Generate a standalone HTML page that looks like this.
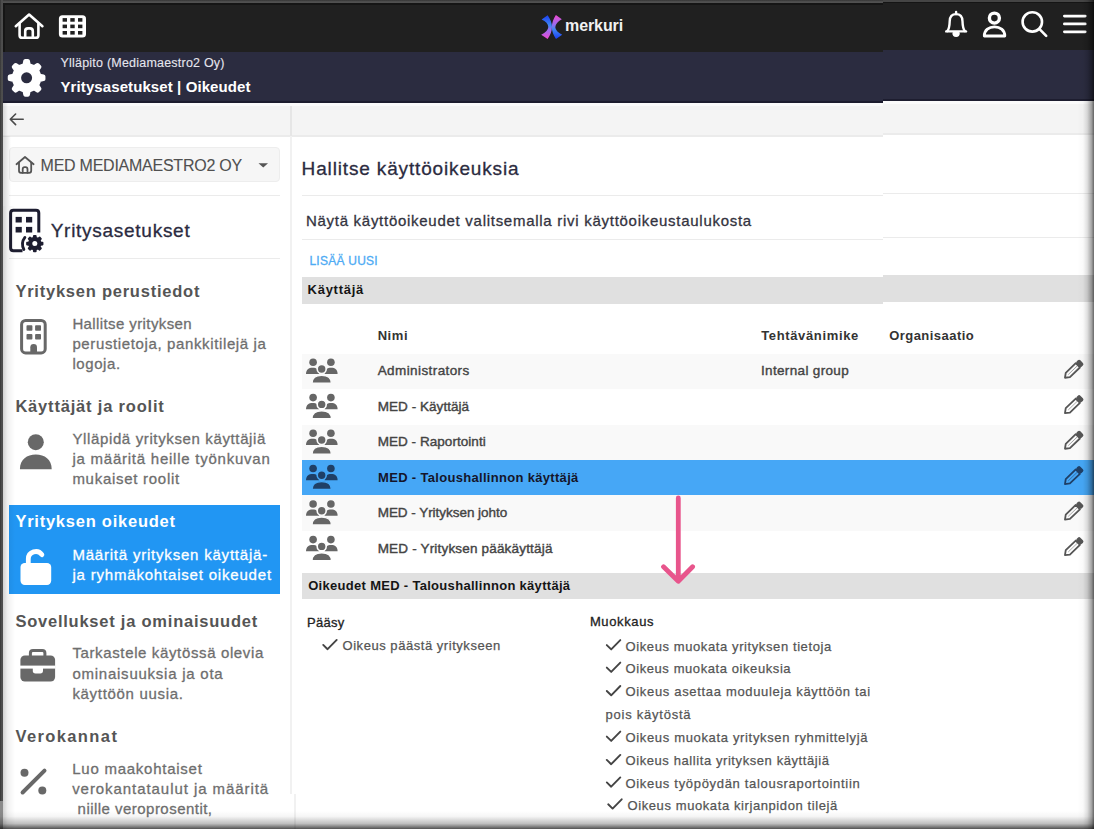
<!DOCTYPE html>
<html><head><meta charset="utf-8">
<style>
html,body{margin:0;padding:0}
body{width:1094px;height:829px;overflow:hidden;position:relative;background:#fff;font-family:"Liberation Sans",sans-serif}
.b{position:absolute}
.t{position:absolute;white-space:nowrap;line-height:0}
svg{position:absolute;overflow:visible}
</style></head><body>
<!-- top bar -->
<div class="b" style="left:0;top:0;width:1094px;height:52px;background:#202020"></div>
<!-- navy -->
<div class="b" style="left:0;top:52px;width:1094px;height:49px;background:#2b2c40"></div>
<div class="b" style="left:0;top:101px;width:1094px;height:2px;background:#1d1d2f"></div>
<!-- gray bar -->
<div class="b" style="left:0;top:103px;width:1094px;height:3px;background:#fbfbfb"></div>
<div class="b" style="left:0;top:106px;width:1094px;height:29px;background:#f4f4f4"></div>
<div class="b" style="left:0;top:135px;width:1094px;height:1.5px;background:#ebebeb"></div>
<!-- sidebar divider -->
<div class="b" style="left:290.2px;top:106px;width:1.5px;height:30px;background:#e6e6e6"></div>
<div class="b" style="left:290.2px;top:136px;width:1.5px;height:658px;background:#f1f1f1"></div>
<div class="b" style="left:294px;top:794px;width:1.5px;height:35px;background:#f1f1f1"></div>
<!-- dropdown -->
<div class="b" style="left:9.3px;top:146.6px;width:269px;height:33.5px;background:#f6f6f6;border:1px solid #ededed;border-radius:4px"></div>
<div class="b" style="left:9px;top:195.2px;width:271px;height:1.2px;background:#ebebeb"></div>
<div class="b" style="left:9px;top:257.6px;width:271px;height:1.2px;background:#ebebeb"></div>
<!-- sidebar selected -->
<div class="b" style="left:9.3px;top:505.1px;width:270.9px;height:88.5px;background:#2196f3"></div>
<!-- main dividers -->
<div class="b" style="left:302px;top:194.8px;width:792px;height:1.2px;background:#ebebeb"></div>
<div class="b" style="left:302px;top:238.8px;width:792px;height:1.2px;background:#ebebeb"></div>
<!-- band 1 -->
<div class="b" style="left:302.4px;top:277px;width:792px;height:26.5px;background:#e0e0e0"></div>
<!-- rows -->
<div class="b" style="left:302.3px;top:353.6px;width:792px;height:35.4px;background:#f9f9f9"></div>
<div class="b" style="left:302.3px;top:424.6px;width:792px;height:35.2px;background:#f9f9f9"></div>
<div class="b" style="left:302.3px;top:459.9px;width:792px;height:35.5px;background:#46a7f6"></div>
<div class="b" style="left:302.3px;top:495.4px;width:792px;height:35.6px;background:#f9f9f9"></div>
<!-- band 2 -->
<div class="b" style="left:302.4px;top:572.5px;width:792px;height:26.5px;background:#e0e0e0"></div>
<svg width="1094" height="829" style="left:0;top:0"><g fill="none" stroke="#ffffff" stroke-width="2.6" stroke-linecap="round" stroke-linejoin="round"><path d="M15.8 26.2 L29.1 14.6 L42.4 26.2"/><path d="M19.6 23.8 V35.2 Q19.6 37.8 22.2 37.8 H35.8 Q38.4 37.8 38.4 35.2 V23.8"/><path d="M25.2 37.8 V31.2 Q25.2 28.4 28 28.4 H30 Q32.8 28.4 32.8 31.2 V37.8"/></g><rect x="58.9" y="15.3" width="27.1" height="22.2" rx="3.5" fill="#fff"/><rect x="62.6" y="18.1" width="4.4" height="3.6" fill="#202020"/><rect x="62.6" y="24.6" width="4.4" height="3.6" fill="#202020"/><rect x="62.6" y="31.0" width="4.4" height="3.6" fill="#202020"/><rect x="70.3" y="18.1" width="4.4" height="3.6" fill="#202020"/><rect x="70.3" y="24.6" width="4.4" height="3.6" fill="#202020"/><rect x="70.3" y="31.0" width="4.4" height="3.6" fill="#202020"/><rect x="78.0" y="18.1" width="4.4" height="3.6" fill="#202020"/><rect x="78.0" y="24.6" width="4.4" height="3.6" fill="#202020"/><rect x="78.0" y="31.0" width="4.4" height="3.6" fill="#202020"/><defs><linearGradient id="gA" x1="0" y1="0" x2="0" y2="1"><stop offset="0" stop-color="#1b3ef2"/><stop offset="0.42" stop-color="#3f86f2"/><stop offset="0.62" stop-color="#9a6cf0"/><stop offset="1" stop-color="#f048d0"/></linearGradient><linearGradient id="gB" x1="0" y1="0" x2="0" y2="1"><stop offset="0" stop-color="#f048d0"/><stop offset="0.4" stop-color="#9a6cf0"/><stop offset="0.6" stop-color="#3f86f2"/><stop offset="1" stop-color="#1b3ef2"/></linearGradient></defs><path d="M541.6 19.6 L547.6 15.2 Q551.9 21 552 27 Q551.9 33 547.6 38.9 L541.2 34.8 Q548 31.5 548.3 27 Q548 22.6 541.6 19.6 Z" fill="url(#gA)"/><path d="M561.8 19.3 L555.9 15 Q551.9 21 551.8 27.3 Q551.9 33.2 556 38.9 L562.2 34.7 Q555.6 31.5 555.3 27.3 Q555.6 22.6 561.8 19.3 Z" fill="url(#gB)"/><g transform="translate(0 1.6)"><g fill="none" stroke="#ffffff" stroke-width="2.4" stroke-linecap="round" stroke-linejoin="round"><path d="M946.2 31.8 H966"/><path d="M947.2 31.6 C949.3 29.2 949.6 26 949.7 21.6 C949.8 16.9 952.5 14.5 956.1 14.5 C959.7 14.5 962.4 16.9 962.5 21.6 C962.6 26 962.9 29.2 965 31.6"/><path d="M956.1 12.3 V14.4"/><path d="M953.6 33.6 A2.5 2.5 0 0 0 958.6 33.6 Z" fill="#fff"/></g><g fill="none" stroke="#ffffff" stroke-width="2.8" stroke-linejoin="round"><circle cx="994.4" cy="18.5" r="5" stroke-width="3.4"/><path d="M984.3 36.4 C984.3 30.5 989 27.2 994.5 27.2 C1000 27.2 1004.8 30.5 1004.8 36.4 Z"/></g><g fill="none" stroke="#ffffff" stroke-width="2.6" stroke-linecap="round"><circle cx="1032.3" cy="22.3" r="9.7"/><path d="M1039.3 29.3 L1046.2 36.2"/></g><g fill="none" stroke="#ffffff" stroke-width="2.8" stroke-linecap="round"><path d="M1064.4 16.5 H1085.2 M1064.4 24.3 H1085.2 M1064.4 32.2 H1085.2"/></g></g></svg>
<svg width="1094" height="829" style="left:0;top:0"><path d="M24.47 64.98 L25.27 60.95 L27.93 60.95 L28.73 64.98 L34.16 67.22 L37.58 64.95 L39.45 66.82 L37.18 70.24 L39.42 75.67 L43.45 76.47 L43.45 79.13 L39.42 79.93 L37.18 85.36 L39.45 88.78 L37.58 90.65 L34.16 88.38 L28.73 90.62 L27.93 94.65 L25.27 94.65 L24.47 90.62 L19.04 88.38 L15.62 90.65 L13.75 88.78 L16.02 85.36 L13.78 79.93 L9.75 79.13 L9.75 76.47 L13.78 75.67 L16.02 70.24 L13.75 66.82 L15.62 64.95 L19.04 67.22 Z" fill="#fff" stroke="#fff" stroke-width="4" stroke-linejoin="round"/><circle cx="26.6" cy="77.8" r="5.5" fill="#2b2c40"/></svg>
<svg width="1094" height="829" style="left:0;top:0"><g fill="none" stroke="#4a4a4a" stroke-width="1.6" stroke-linecap="round" stroke-linejoin="round"><path d="M23.2 119.3 H10.5 M15.6 114 L10.3 119.3 L15.6 124.6"/></g><g fill="none" stroke="#555" stroke-width="1.8" stroke-linecap="round" stroke-linejoin="round"><path d="M16.5 164.2 L25 157 L33.6 164.2"/><path d="M19 162.6 V170.8 Q19 172.8 21 172.8 H29.2 Q31.2 172.8 31.2 170.8 V162.6"/><path d="M22.7 172.8 V169.2 Q22.7 167.2 24.7 167.2 H25.5 Q27.5 167.2 27.5 169.2 V172.8"/></g><path d="M258.5 163.2 H268 L263.25 167.6 Z" fill="#555"/><g fill="none" stroke="#1d1d30" stroke-width="3" stroke-linejoin="round"><path d="M22.5 250.8 H13.5 Q10.6 250.8 10.6 247.8 V213 Q10.6 210.2 13.5 210.2 H36 Q38.8 210.2 38.8 213 V232.5"/><path d="M24.9 237.4 A11.2 11.2 0 0 0 23.9 249.5" stroke-width="2.8" stroke-linecap="round"/></g><rect x="15.6" y="216.9" width="6.2" height="5.6" fill="#1d1d30"/><rect x="26" y="216.9" width="6.2" height="5.6" fill="#1d1d30"/><rect x="15.6" y="226.9" width="6.2" height="5.6" fill="#1d1d30"/><rect x="26" y="226.9" width="6.2" height="5.6" fill="#1d1d30"/><path d="M33.65 237.81 L33.88 235.85 L35.72 235.85 L35.95 237.81 L38.08 238.69 L39.63 237.47 L40.93 238.77 L39.71 240.32 L40.59 242.45 L42.55 242.68 L42.55 244.52 L40.59 244.75 L39.71 246.88 L40.93 248.43 L39.63 249.73 L38.08 248.51 L35.95 249.39 L35.72 251.35 L33.88 251.35 L33.65 249.39 L31.52 248.51 L29.97 249.73 L28.67 248.43 L29.89 246.88 L29.01 244.75 L27.05 244.52 L27.05 242.68 L29.01 242.45 L29.89 240.32 L28.67 238.77 L29.97 237.47 L31.52 238.69 Z" fill="#1d1d30" stroke="#1d1d30" stroke-width="1.8" stroke-linejoin="round"/><circle cx="34.8" cy="243.6" r="2.5" fill="#fff"/><rect x="21.6" y="320.4" width="23.6" height="32.5" rx="4" fill="none" stroke="#686868" stroke-width="3"/><rect x="26.5" y="325.3" width="5.9" height="5.5" rx="0.8" fill="#686868"/><rect x="35.1" y="325.3" width="5.9" height="5.5" rx="0.8" fill="#686868"/><rect x="26.5" y="334.1" width="5.9" height="5.5" rx="0.8" fill="#686868"/><rect x="35.1" y="334.1" width="5.9" height="5.5" rx="0.8" fill="#686868"/><path d="M30.3 353 V347.3 A3.35 3.35 0 0 1 37 347.3 V353 Z" fill="#686868"/><circle cx="35.8" cy="442.2" r="8" fill="#686868"/><path d="M19.9 469.3 C19.9 459.5 27 454.5 35.8 454.5 C44.6 454.5 51.7 459.5 51.7 469.3 Z" fill="#686868"/><rect x="20.5" y="562.9" width="30.7" height="22" rx="4.2" fill="#fff"/><path d="M28.3 564 V559 A7.5 7.5 0 0 1 41.9 554.7" fill="none" stroke="#fff" stroke-width="4.8" stroke-linecap="round"/><rect x="30.4" y="650.5" width="14.5" height="8" rx="2.6" fill="none" stroke="#686868" stroke-width="3"/><rect x="20.4" y="655.4" width="34.7" height="26.2" rx="4.5" fill="#686868"/><rect x="20" y="665.6" width="35.5" height="3" fill="#fff"/><path d="M32.8 668 V670.8 Q32.8 673.5 35.5 673.5 H40.3 Q43 673.5 43 670.8 V668 Z" fill="#fff"/><circle cx="24.5" cy="772.8" r="4" fill="#686868"/><circle cx="42.3" cy="790.6" r="4" fill="#686868"/><path d="M22.6 792.5 L44.5 770.6" stroke="#686868" stroke-width="4" stroke-linecap="round"/></svg>
<svg width="1094" height="829" style="left:0;top:0"><circle cx="313.1" cy="362.2" r="3.8" fill="#666666"/><circle cx="330.9" cy="362.2" r="3.8" fill="#666666"/><path d="M306 373.9 C306 369.6 308.8 367.7 312.6 367.7 C316.4 367.7 319.2 369.6 319.2 373.9 Z" fill="#666666"/><path d="M324.6 373.9 C324.6 369.6 327.4 367.7 331.2 367.7 C335 367.7 337.6 369.6 337.6 373.9 Z" fill="#666666"/><circle cx="321.7" cy="369.0" r="4.5" fill="#666666" stroke="#f9f9f9" stroke-width="1.6"/><path d="M312 383.2 C312 377.8 316.3 375.3 321.7 375.3 C327.1 375.3 331.4 377.8 331.4 383.2 Z" fill="#666666" stroke="#f9f9f9" stroke-width="1.4"/><g transform="translate(1073.3 369.7) rotate(-44)"><path d="M-11.6 0 L-7.6 -3 H6.3 V3 H-7.6 Z" fill="none" stroke="#555555" stroke-width="1.8" stroke-linejoin="round"/><rect x="6.6" y="-3.6" width="5" height="7.2" rx="1.8" fill="#555555"/><path d="M-7 0 H5.5" stroke="#555555" stroke-width="0.8" stroke-opacity="0.6"/></g><circle cx="313.1" cy="397.6" r="3.8" fill="#666666"/><circle cx="330.9" cy="397.6" r="3.8" fill="#666666"/><path d="M306 409.3 C306 405.0 308.8 403.1 312.6 403.1 C316.4 403.1 319.2 405.0 319.2 409.3 Z" fill="#666666"/><path d="M324.6 409.3 C324.6 405.0 327.4 403.1 331.2 403.1 C335 403.1 337.6 405.0 337.6 409.3 Z" fill="#666666"/><circle cx="321.7" cy="404.4" r="4.5" fill="#666666" stroke="#ffffff" stroke-width="1.6"/><path d="M312 418.6 C312 413.2 316.3 410.7 321.7 410.7 C327.1 410.7 331.4 413.2 331.4 418.6 Z" fill="#666666" stroke="#ffffff" stroke-width="1.4"/><g transform="translate(1073.3 405.1) rotate(-44)"><path d="M-11.6 0 L-7.6 -3 H6.3 V3 H-7.6 Z" fill="none" stroke="#555555" stroke-width="1.8" stroke-linejoin="round"/><rect x="6.6" y="-3.6" width="5" height="7.2" rx="1.8" fill="#555555"/><path d="M-7 0 H5.5" stroke="#555555" stroke-width="0.8" stroke-opacity="0.6"/></g><circle cx="313.1" cy="433.2" r="3.8" fill="#666666"/><circle cx="330.9" cy="433.2" r="3.8" fill="#666666"/><path d="M306 444.9 C306 440.6 308.8 438.7 312.6 438.7 C316.4 438.7 319.2 440.6 319.2 444.9 Z" fill="#666666"/><path d="M324.6 444.9 C324.6 440.6 327.4 438.7 331.2 438.7 C335 438.7 337.6 440.6 337.6 444.9 Z" fill="#666666"/><circle cx="321.7" cy="440.0" r="4.5" fill="#666666" stroke="#f9f9f9" stroke-width="1.6"/><path d="M312 454.2 C312 448.8 316.3 446.3 321.7 446.3 C327.1 446.3 331.4 448.8 331.4 454.2 Z" fill="#666666" stroke="#f9f9f9" stroke-width="1.4"/><g transform="translate(1073.3 440.7) rotate(-44)"><path d="M-11.6 0 L-7.6 -3 H6.3 V3 H-7.6 Z" fill="none" stroke="#555555" stroke-width="1.8" stroke-linejoin="round"/><rect x="6.6" y="-3.6" width="5" height="7.2" rx="1.8" fill="#555555"/><path d="M-7 0 H5.5" stroke="#555555" stroke-width="0.8" stroke-opacity="0.6"/></g><circle cx="313.1" cy="468.5" r="3.8" fill="#1f3f66"/><circle cx="330.9" cy="468.5" r="3.8" fill="#1f3f66"/><path d="M306 480.2 C306 475.9 308.8 474.0 312.6 474.0 C316.4 474.0 319.2 475.9 319.2 480.2 Z" fill="#1f3f66"/><path d="M324.6 480.2 C324.6 475.9 327.4 474.0 331.2 474.0 C335 474.0 337.6 475.9 337.6 480.2 Z" fill="#1f3f66"/><circle cx="321.7" cy="475.3" r="4.5" fill="#1f3f66" stroke="#46a7f6" stroke-width="1.6"/><path d="M312 489.5 C312 484.1 316.3 481.6 321.7 481.6 C327.1 481.6 331.4 484.1 331.4 489.5 Z" fill="#1f3f66" stroke="#46a7f6" stroke-width="1.4"/><g transform="translate(1073.3 476.0) rotate(-44)"><path d="M-11.6 0 L-7.6 -3 H6.3 V3 H-7.6 Z" fill="none" stroke="#1f3f66" stroke-width="1.8" stroke-linejoin="round"/><rect x="6.6" y="-3.6" width="5" height="7.2" rx="1.8" fill="#1f3f66"/><path d="M-7 0 H5.5" stroke="#1f3f66" stroke-width="0.8" stroke-opacity="0.6"/></g><circle cx="313.1" cy="504.0" r="3.8" fill="#666666"/><circle cx="330.9" cy="504.0" r="3.8" fill="#666666"/><path d="M306 515.7 C306 511.4 308.8 509.5 312.6 509.5 C316.4 509.5 319.2 511.4 319.2 515.7 Z" fill="#666666"/><path d="M324.6 515.7 C324.6 511.4 327.4 509.5 331.2 509.5 C335 509.5 337.6 511.4 337.6 515.7 Z" fill="#666666"/><circle cx="321.7" cy="510.8" r="4.5" fill="#666666" stroke="#f9f9f9" stroke-width="1.6"/><path d="M312 525.0 C312 519.6 316.3 517.1 321.7 517.1 C327.1 517.1 331.4 519.6 331.4 525.0 Z" fill="#666666" stroke="#f9f9f9" stroke-width="1.4"/><g transform="translate(1073.3 511.5) rotate(-44)"><path d="M-11.6 0 L-7.6 -3 H6.3 V3 H-7.6 Z" fill="none" stroke="#555555" stroke-width="1.8" stroke-linejoin="round"/><rect x="6.6" y="-3.6" width="5" height="7.2" rx="1.8" fill="#555555"/><path d="M-7 0 H5.5" stroke="#555555" stroke-width="0.8" stroke-opacity="0.6"/></g><circle cx="313.1" cy="539.6" r="3.8" fill="#666666"/><circle cx="330.9" cy="539.6" r="3.8" fill="#666666"/><path d="M306 551.3 C306 547.0 308.8 545.1 312.6 545.1 C316.4 545.1 319.2 547.0 319.2 551.3 Z" fill="#666666"/><path d="M324.6 551.3 C324.6 547.0 327.4 545.1 331.2 545.1 C335 545.1 337.6 547.0 337.6 551.3 Z" fill="#666666"/><circle cx="321.7" cy="546.4" r="4.5" fill="#666666" stroke="#ffffff" stroke-width="1.6"/><path d="M312 560.6 C312 555.2 316.3 552.7 321.7 552.7 C327.1 552.7 331.4 555.2 331.4 560.6 Z" fill="#666666" stroke="#ffffff" stroke-width="1.4"/><g transform="translate(1073.3 547.1) rotate(-44)"><path d="M-11.6 0 L-7.6 -3 H6.3 V3 H-7.6 Z" fill="none" stroke="#555555" stroke-width="1.8" stroke-linejoin="round"/><rect x="6.6" y="-3.6" width="5" height="7.2" rx="1.8" fill="#555555"/><path d="M-7 0 H5.5" stroke="#555555" stroke-width="0.8" stroke-opacity="0.6"/></g></svg>
<svg width="1094" height="829" style="left:0;top:0"><g fill="none" stroke="#e8558c" stroke-width="4.8" stroke-linecap="round" stroke-linejoin="round"><path d="M678.3 498 V580.5 M663.5 566.8 L678.3 581.2 L692.6 566.8"/></g><path d="M323.2 644.9 L327.6 649.2 L336.7 639.9" fill="none" stroke="#444" stroke-width="1.9" stroke-linecap="round" stroke-linejoin="round"/><path d="M606.8 645.1 L611.2 649.4 L620.3 640.1" fill="none" stroke="#444" stroke-width="1.9" stroke-linecap="round" stroke-linejoin="round"/><path d="M606.8 667.6 L611.2 671.9 L620.3 662.6" fill="none" stroke="#444" stroke-width="1.9" stroke-linecap="round" stroke-linejoin="round"/><path d="M606.8 691.0 L611.2 695.3 L620.3 686.0" fill="none" stroke="#444" stroke-width="1.9" stroke-linecap="round" stroke-linejoin="round"/><path d="M606.8 736.6 L611.2 740.9 L620.3 731.6" fill="none" stroke="#444" stroke-width="1.9" stroke-linecap="round" stroke-linejoin="round"/><path d="M606.8 759.9 L611.2 764.2 L620.3 754.9" fill="none" stroke="#444" stroke-width="1.9" stroke-linecap="round" stroke-linejoin="round"/><path d="M606.8 782.4 L611.2 786.7 L620.3 777.4" fill="none" stroke="#444" stroke-width="1.9" stroke-linecap="round" stroke-linejoin="round"/><path d="M608.2 804.3 L612.6 808.6 L621.7 799.3" fill="none" stroke="#444" stroke-width="1.9" stroke-linecap="round" stroke-linejoin="round"/></svg>
<div class="t" style="left:60.5px;top:62.6px;font-size:12.5px;font-weight:400;color:#e6e6ee;letter-spacing:0.215px;-webkit-text-stroke:0.1px #e6e6ee">Ylläpito (Mediamaestro2 Oy)</div>
<div class="t" style="left:60.5px;top:87.0px;font-size:15px;font-weight:700;color:#ffffff;letter-spacing:0.095px;">Yritysasetukset | Oikeudet</div>
<div class="t" style="left:565.1px;top:25.9px;font-size:16px;font-weight:700;color:#f2f2f2;letter-spacing:-0.117px;">merkuri</div>
<div class="t" style="left:40.6px;top:165.7px;font-size:16px;font-weight:400;color:#505050;letter-spacing:-0.250px;-webkit-text-stroke:0.1px #505050">MED MEDIAMAESTRO2 OY</div>
<div class="t" style="left:50.7px;top:230.9px;font-size:19px;font-weight:400;color:#2b2b40;letter-spacing:0.727px;-webkit-text-stroke:0.3px #2b2b40">Yritysasetukset</div>
<div class="t" style="left:15.4px;top:290.7px;font-size:16.5px;font-weight:700;color:#555555;letter-spacing:0.764px;">Yrityksen perustiedot</div>
<div class="t" style="left:72.4px;top:323.6px;font-size:15px;font-weight:400;color:#6e6e6e;letter-spacing:0.398px;-webkit-text-stroke:0.3px #6e6e6e">Hallitse yrityksen</div>
<div class="t" style="left:72.4px;top:344.2px;font-size:15px;font-weight:400;color:#6e6e6e;letter-spacing:0.627px;-webkit-text-stroke:0.3px #6e6e6e">perustietoja, pankkitilejä ja</div>
<div class="t" style="left:72.4px;top:364.1px;font-size:15px;font-weight:400;color:#6e6e6e;letter-spacing:0.583px;-webkit-text-stroke:0.3px #6e6e6e">logoja.</div>
<div class="t" style="left:15.4px;top:405.7px;font-size:16.5px;font-weight:700;color:#555555;letter-spacing:0.812px;">Käyttäjät ja roolit</div>
<div class="t" style="left:72.4px;top:438.6px;font-size:15px;font-weight:400;color:#6e6e6e;letter-spacing:0.633px;-webkit-text-stroke:0.3px #6e6e6e">Ylläpidä yrityksen käyttäjiä</div>
<div class="t" style="left:72.4px;top:458.8px;font-size:15px;font-weight:400;color:#6e6e6e;letter-spacing:0.761px;-webkit-text-stroke:0.3px #6e6e6e">ja määritä heille työnkuvan</div>
<div class="t" style="left:72.4px;top:479.1px;font-size:15px;font-weight:400;color:#6e6e6e;letter-spacing:0.721px;-webkit-text-stroke:0.3px #6e6e6e">mukaiset roolit</div>
<div class="t" style="left:15.4px;top:521.0px;font-size:16.5px;font-weight:700;color:#ffffff;letter-spacing:0.757px;">Yrityksen oikeudet</div>
<div class="t" style="left:72.4px;top:554.8px;font-size:15px;font-weight:400;color:#ffffff;letter-spacing:0.791px;-webkit-text-stroke:0.3px #ffffff">Määritä yrityksen käyttäjä-</div>
<div class="t" style="left:72.4px;top:574.5px;font-size:15px;font-weight:400;color:#ffffff;letter-spacing:0.810px;-webkit-text-stroke:0.3px #ffffff">ja ryhmäkohtaiset oikeudet</div>
<div class="t" style="left:15.4px;top:620.7px;font-size:16.5px;font-weight:700;color:#555555;letter-spacing:0.765px;">Sovellukset ja ominaisuudet</div>
<div class="t" style="left:72.4px;top:653.0px;font-size:15px;font-weight:400;color:#6e6e6e;letter-spacing:0.632px;-webkit-text-stroke:0.3px #6e6e6e">Tarkastele käytössä olevia</div>
<div class="t" style="left:72.4px;top:674.2px;font-size:15px;font-weight:400;color:#6e6e6e;letter-spacing:0.757px;-webkit-text-stroke:0.3px #6e6e6e">ominaisuuksia ja ota</div>
<div class="t" style="left:72.4px;top:694.1px;font-size:15px;font-weight:400;color:#6e6e6e;letter-spacing:0.692px;-webkit-text-stroke:0.3px #6e6e6e">käyttöön uusia.</div>
<div class="t" style="left:15.4px;top:735.8px;font-size:16.5px;font-weight:700;color:#555555;letter-spacing:1.392px;">Verokannat</div>
<div class="t" style="left:72.2px;top:768.8px;font-size:15px;font-weight:400;color:#6e6e6e;letter-spacing:0.752px;-webkit-text-stroke:0.3px #6e6e6e">Luo maakohtaiset</div>
<div class="t" style="left:72.2px;top:789.2px;font-size:15px;font-weight:400;color:#6e6e6e;letter-spacing:0.936px;-webkit-text-stroke:0.3px #6e6e6e">verokantataulut ja määritä</div>
<div class="t" style="left:77.6px;top:808.5px;font-size:15px;font-weight:400;color:#6e6e6e;letter-spacing:0.467px;-webkit-text-stroke:0.3px #6e6e6e">niille veroprosentit,</div>
<div class="t" style="left:301.6px;top:168.5px;font-size:19px;font-weight:400;color:#2b2b40;letter-spacing:0.849px;-webkit-text-stroke:0.3px #2b2b40">Hallitse käyttöoikeuksia</div>
<div class="t" style="left:305.9px;top:220.9px;font-size:15px;font-weight:400;color:#333340;letter-spacing:0.724px;-webkit-text-stroke:0.3px #333340">Näytä käyttöoikeudet valitsemalla rivi käyttöoikeustaulukosta</div>
<div class="t" style="left:309.4px;top:261.3px;font-size:12px;font-weight:400;color:#4eabf4;letter-spacing:0.252px;-webkit-text-stroke:0.3px #4eabf4">LISÄÄ UUSI</div>
<div class="t" style="left:307.6px;top:290.1px;font-size:13px;font-weight:700;color:#151515;letter-spacing:0.717px;">Käyttäjä</div>
<div class="t" style="left:377.7px;top:336.4px;font-size:13px;font-weight:700;color:#333333;letter-spacing:0.543px;">Nimi</div>
<div class="t" style="left:761.2px;top:336.4px;font-size:13px;font-weight:700;color:#333333;letter-spacing:0.645px;">Tehtävänimike</div>
<div class="t" style="left:889.2px;top:336.4px;font-size:13px;font-weight:700;color:#333333;letter-spacing:0.457px;">Organisaatio</div>
<div class="t" style="left:377.7px;top:371.1px;font-size:13.5px;font-weight:400;color:#444444;letter-spacing:0.409px;-webkit-text-stroke:0.4px #444444">Administrators</div>
<div class="t" style="left:761.0px;top:371.3px;font-size:13.5px;font-weight:400;color:#444444;letter-spacing:0.338px;-webkit-text-stroke:0.4px #444444">Internal group</div>
<div class="t" style="left:377.7px;top:406.7px;font-size:13.5px;font-weight:400;color:#444444;letter-spacing:0.048px;-webkit-text-stroke:0.4px #444444">MED - Käyttäjä</div>
<div class="t" style="left:377.7px;top:441.8px;font-size:13.5px;font-weight:400;color:#444444;letter-spacing:0.044px;-webkit-text-stroke:0.4px #444444">MED - Raportointi</div>
<div class="t" style="left:378.1px;top:477.8px;font-size:13px;font-weight:700;color:#15152a;letter-spacing:0.311px;">MED - Taloushallinnon käyttäjä</div>
<div class="t" style="left:377.7px;top:513.3px;font-size:13.5px;font-weight:400;color:#444444;letter-spacing:-0.040px;-webkit-text-stroke:0.4px #444444">MED - Yrityksen johto</div>
<div class="t" style="left:377.7px;top:548.5px;font-size:13.5px;font-weight:400;color:#444444;letter-spacing:0.178px;-webkit-text-stroke:0.4px #444444">MED - Yrityksen pääkäyttäjä</div>
<div class="t" style="left:308.2px;top:586.2px;font-size:13px;font-weight:700;color:#151515;letter-spacing:0.302px;">Oikeudet MED - Taloushallinnon käyttäjä</div>
<div class="t" style="left:307.1px;top:622.5px;font-size:13px;font-weight:400;color:#222222;letter-spacing:0.265px;-webkit-text-stroke:0.3px #222">Pääsy</div>
<div class="t" style="left:342.5px;top:646.2px;font-size:13px;font-weight:400;color:#555555;letter-spacing:0.542px;-webkit-text-stroke:0.25px #555">Oikeus päästä yritykseen</div>
<div class="t" style="left:589.9px;top:622.4px;font-size:13px;font-weight:400;color:#222222;letter-spacing:0.621px;-webkit-text-stroke:0.3px #222">Muokkaus</div>
<div class="t" style="left:625.5px;top:646.5px;font-size:13px;font-weight:400;color:#555555;letter-spacing:0.599px;-webkit-text-stroke:0.25px #555">Oikeus muokata yrityksen tietoja</div>
<div class="t" style="left:625.5px;top:669.0px;font-size:13px;font-weight:400;color:#555555;letter-spacing:0.580px;-webkit-text-stroke:0.25px #555">Oikeus muokata oikeuksia</div>
<div class="t" style="left:625.5px;top:692.4px;font-size:13px;font-weight:400;color:#555555;letter-spacing:0.672px;-webkit-text-stroke:0.25px #555">Oikeus asettaa moduuleja käyttöön tai</div>
<div class="t" style="left:605.5px;top:714.7px;font-size:13px;font-weight:400;color:#555555;letter-spacing:0.760px;-webkit-text-stroke:0.25px #555">pois käytöstä</div>
<div class="t" style="left:625.5px;top:738.0px;font-size:13px;font-weight:400;color:#555555;letter-spacing:0.659px;-webkit-text-stroke:0.25px #555">Oikeus muokata yrityksen ryhmittelyjä</div>
<div class="t" style="left:625.5px;top:761.2px;font-size:13px;font-weight:400;color:#555555;letter-spacing:0.583px;-webkit-text-stroke:0.25px #555">Oikeus hallita yrityksen käyttäjiä</div>
<div class="t" style="left:625.5px;top:783.8px;font-size:13px;font-weight:400;color:#555555;letter-spacing:0.683px;-webkit-text-stroke:0.25px #555">Oikeus työpöydän talousraportointiin</div>
<div class="t" style="left:627.5px;top:805.7px;font-size:13px;font-weight:400;color:#555555;letter-spacing:0.591px;-webkit-text-stroke:0.25px #555">Oikeus muokata kirjanpidon tilejä</div>
<div class="b" style="left:883px;top:0;width:211px;height:320px;overflow:hidden"><div class="b" style="left:-883px;top:-1.6px;width:1094px;height:829px;background:#fff">
<!-- top bar -->
<div class="b" style="left:0;top:0;width:1094px;height:52px;background:#202020"></div>
<!-- navy -->
<div class="b" style="left:0;top:52px;width:1094px;height:49px;background:#2b2c40"></div>
<div class="b" style="left:0;top:101px;width:1094px;height:2px;background:#1d1d2f"></div>
<!-- gray bar -->
<div class="b" style="left:0;top:103px;width:1094px;height:3px;background:#fbfbfb"></div>
<div class="b" style="left:0;top:106px;width:1094px;height:29px;background:#f4f4f4"></div>
<div class="b" style="left:0;top:135px;width:1094px;height:1.5px;background:#ebebeb"></div>
<!-- sidebar divider -->
<div class="b" style="left:290.2px;top:106px;width:1.5px;height:30px;background:#e6e6e6"></div>
<div class="b" style="left:290.2px;top:136px;width:1.5px;height:658px;background:#f1f1f1"></div>
<div class="b" style="left:294px;top:794px;width:1.5px;height:35px;background:#f1f1f1"></div>
<!-- dropdown -->
<div class="b" style="left:9.3px;top:146.6px;width:269px;height:33.5px;background:#f6f6f6;border:1px solid #ededed;border-radius:4px"></div>
<div class="b" style="left:9px;top:195.2px;width:271px;height:1.2px;background:#ebebeb"></div>
<div class="b" style="left:9px;top:257.6px;width:271px;height:1.2px;background:#ebebeb"></div>
<!-- sidebar selected -->
<div class="b" style="left:9.3px;top:505.1px;width:270.9px;height:88.5px;background:#2196f3"></div>
<!-- main dividers -->
<div class="b" style="left:302px;top:194.8px;width:792px;height:1.2px;background:#ebebeb"></div>
<div class="b" style="left:302px;top:238.8px;width:792px;height:1.2px;background:#ebebeb"></div>
<!-- band 1 -->
<div class="b" style="left:302.4px;top:277px;width:792px;height:26.5px;background:#e0e0e0"></div>
<!-- rows -->
<div class="b" style="left:302.3px;top:353.6px;width:792px;height:35.4px;background:#f9f9f9"></div>
<div class="b" style="left:302.3px;top:424.6px;width:792px;height:35.2px;background:#f9f9f9"></div>
<div class="b" style="left:302.3px;top:459.9px;width:792px;height:35.5px;background:#46a7f6"></div>
<div class="b" style="left:302.3px;top:495.4px;width:792px;height:35.6px;background:#f9f9f9"></div>
<!-- band 2 -->
<div class="b" style="left:302.4px;top:572.5px;width:792px;height:26.5px;background:#e0e0e0"></div>
<svg width="1094" height="829" style="left:0;top:0"><g fill="none" stroke="#ffffff" stroke-width="2.6" stroke-linecap="round" stroke-linejoin="round"><path d="M15.8 26.2 L29.1 14.6 L42.4 26.2"/><path d="M19.6 23.8 V35.2 Q19.6 37.8 22.2 37.8 H35.8 Q38.4 37.8 38.4 35.2 V23.8"/><path d="M25.2 37.8 V31.2 Q25.2 28.4 28 28.4 H30 Q32.8 28.4 32.8 31.2 V37.8"/></g><rect x="58.9" y="15.3" width="27.1" height="22.2" rx="3.5" fill="#fff"/><rect x="62.6" y="18.1" width="4.4" height="3.6" fill="#202020"/><rect x="62.6" y="24.6" width="4.4" height="3.6" fill="#202020"/><rect x="62.6" y="31.0" width="4.4" height="3.6" fill="#202020"/><rect x="70.3" y="18.1" width="4.4" height="3.6" fill="#202020"/><rect x="70.3" y="24.6" width="4.4" height="3.6" fill="#202020"/><rect x="70.3" y="31.0" width="4.4" height="3.6" fill="#202020"/><rect x="78.0" y="18.1" width="4.4" height="3.6" fill="#202020"/><rect x="78.0" y="24.6" width="4.4" height="3.6" fill="#202020"/><rect x="78.0" y="31.0" width="4.4" height="3.6" fill="#202020"/><defs><linearGradient id="gA2" x1="0" y1="0" x2="0" y2="1"><stop offset="0" stop-color="#1b3ef2"/><stop offset="0.42" stop-color="#3f86f2"/><stop offset="0.62" stop-color="#9a6cf0"/><stop offset="1" stop-color="#f048d0"/></linearGradient><linearGradient id="gB2" x1="0" y1="0" x2="0" y2="1"><stop offset="0" stop-color="#f048d0"/><stop offset="0.4" stop-color="#9a6cf0"/><stop offset="0.6" stop-color="#3f86f2"/><stop offset="1" stop-color="#1b3ef2"/></linearGradient></defs><path d="M541.6 19.6 L547.6 15.2 Q551.9 21 552 27 Q551.9 33 547.6 38.9 L541.2 34.8 Q548 31.5 548.3 27 Q548 22.6 541.6 19.6 Z" fill="url(#gA2)"/><path d="M561.8 19.3 L555.9 15 Q551.9 21 551.8 27.3 Q551.9 33.2 556 38.9 L562.2 34.7 Q555.6 31.5 555.3 27.3 Q555.6 22.6 561.8 19.3 Z" fill="url(#gB2)"/><g transform="translate(0 1.6)"><g fill="none" stroke="#ffffff" stroke-width="2.4" stroke-linecap="round" stroke-linejoin="round"><path d="M946.2 31.8 H966"/><path d="M947.2 31.6 C949.3 29.2 949.6 26 949.7 21.6 C949.8 16.9 952.5 14.5 956.1 14.5 C959.7 14.5 962.4 16.9 962.5 21.6 C962.6 26 962.9 29.2 965 31.6"/><path d="M956.1 12.3 V14.4"/><path d="M953.6 33.6 A2.5 2.5 0 0 0 958.6 33.6 Z" fill="#fff"/></g><g fill="none" stroke="#ffffff" stroke-width="2.8" stroke-linejoin="round"><circle cx="994.4" cy="18.5" r="5" stroke-width="3.4"/><path d="M984.3 36.4 C984.3 30.5 989 27.2 994.5 27.2 C1000 27.2 1004.8 30.5 1004.8 36.4 Z"/></g><g fill="none" stroke="#ffffff" stroke-width="2.6" stroke-linecap="round"><circle cx="1032.3" cy="22.3" r="9.7"/><path d="M1039.3 29.3 L1046.2 36.2"/></g><g fill="none" stroke="#ffffff" stroke-width="2.8" stroke-linecap="round"><path d="M1064.4 16.5 H1085.2 M1064.4 24.3 H1085.2 M1064.4 32.2 H1085.2"/></g></g></svg>
<svg width="1094" height="829" style="left:0;top:0"><path d="M24.47 64.98 L25.27 60.95 L27.93 60.95 L28.73 64.98 L34.16 67.22 L37.58 64.95 L39.45 66.82 L37.18 70.24 L39.42 75.67 L43.45 76.47 L43.45 79.13 L39.42 79.93 L37.18 85.36 L39.45 88.78 L37.58 90.65 L34.16 88.38 L28.73 90.62 L27.93 94.65 L25.27 94.65 L24.47 90.62 L19.04 88.38 L15.62 90.65 L13.75 88.78 L16.02 85.36 L13.78 79.93 L9.75 79.13 L9.75 76.47 L13.78 75.67 L16.02 70.24 L13.75 66.82 L15.62 64.95 L19.04 67.22 Z" fill="#fff" stroke="#fff" stroke-width="4" stroke-linejoin="round"/><circle cx="26.6" cy="77.8" r="5.5" fill="#2b2c40"/></svg>
<svg width="1094" height="829" style="left:0;top:0"><g fill="none" stroke="#4a4a4a" stroke-width="1.6" stroke-linecap="round" stroke-linejoin="round"><path d="M23.2 119.3 H10.5 M15.6 114 L10.3 119.3 L15.6 124.6"/></g><g fill="none" stroke="#555" stroke-width="1.8" stroke-linecap="round" stroke-linejoin="round"><path d="M16.5 164.2 L25 157 L33.6 164.2"/><path d="M19 162.6 V170.8 Q19 172.8 21 172.8 H29.2 Q31.2 172.8 31.2 170.8 V162.6"/><path d="M22.7 172.8 V169.2 Q22.7 167.2 24.7 167.2 H25.5 Q27.5 167.2 27.5 169.2 V172.8"/></g><path d="M258.5 163.2 H268 L263.25 167.6 Z" fill="#555"/><g fill="none" stroke="#1d1d30" stroke-width="3" stroke-linejoin="round"><path d="M22.5 250.8 H13.5 Q10.6 250.8 10.6 247.8 V213 Q10.6 210.2 13.5 210.2 H36 Q38.8 210.2 38.8 213 V232.5"/><path d="M24.9 237.4 A11.2 11.2 0 0 0 23.9 249.5" stroke-width="2.8" stroke-linecap="round"/></g><rect x="15.6" y="216.9" width="6.2" height="5.6" fill="#1d1d30"/><rect x="26" y="216.9" width="6.2" height="5.6" fill="#1d1d30"/><rect x="15.6" y="226.9" width="6.2" height="5.6" fill="#1d1d30"/><rect x="26" y="226.9" width="6.2" height="5.6" fill="#1d1d30"/><path d="M33.65 237.81 L33.88 235.85 L35.72 235.85 L35.95 237.81 L38.08 238.69 L39.63 237.47 L40.93 238.77 L39.71 240.32 L40.59 242.45 L42.55 242.68 L42.55 244.52 L40.59 244.75 L39.71 246.88 L40.93 248.43 L39.63 249.73 L38.08 248.51 L35.95 249.39 L35.72 251.35 L33.88 251.35 L33.65 249.39 L31.52 248.51 L29.97 249.73 L28.67 248.43 L29.89 246.88 L29.01 244.75 L27.05 244.52 L27.05 242.68 L29.01 242.45 L29.89 240.32 L28.67 238.77 L29.97 237.47 L31.52 238.69 Z" fill="#1d1d30" stroke="#1d1d30" stroke-width="1.8" stroke-linejoin="round"/><circle cx="34.8" cy="243.6" r="2.5" fill="#fff"/><rect x="21.6" y="320.4" width="23.6" height="32.5" rx="4" fill="none" stroke="#686868" stroke-width="3"/><rect x="26.5" y="325.3" width="5.9" height="5.5" rx="0.8" fill="#686868"/><rect x="35.1" y="325.3" width="5.9" height="5.5" rx="0.8" fill="#686868"/><rect x="26.5" y="334.1" width="5.9" height="5.5" rx="0.8" fill="#686868"/><rect x="35.1" y="334.1" width="5.9" height="5.5" rx="0.8" fill="#686868"/><path d="M30.3 353 V347.3 A3.35 3.35 0 0 1 37 347.3 V353 Z" fill="#686868"/><circle cx="35.8" cy="442.2" r="8" fill="#686868"/><path d="M19.9 469.3 C19.9 459.5 27 454.5 35.8 454.5 C44.6 454.5 51.7 459.5 51.7 469.3 Z" fill="#686868"/><rect x="20.5" y="562.9" width="30.7" height="22" rx="4.2" fill="#fff"/><path d="M28.3 564 V559 A7.5 7.5 0 0 1 41.9 554.7" fill="none" stroke="#fff" stroke-width="4.8" stroke-linecap="round"/><rect x="30.4" y="650.5" width="14.5" height="8" rx="2.6" fill="none" stroke="#686868" stroke-width="3"/><rect x="20.4" y="655.4" width="34.7" height="26.2" rx="4.5" fill="#686868"/><rect x="20" y="665.6" width="35.5" height="3" fill="#fff"/><path d="M32.8 668 V670.8 Q32.8 673.5 35.5 673.5 H40.3 Q43 673.5 43 670.8 V668 Z" fill="#fff"/><circle cx="24.5" cy="772.8" r="4" fill="#686868"/><circle cx="42.3" cy="790.6" r="4" fill="#686868"/><path d="M22.6 792.5 L44.5 770.6" stroke="#686868" stroke-width="4" stroke-linecap="round"/></svg>
<svg width="1094" height="829" style="left:0;top:0"><circle cx="313.1" cy="362.2" r="3.8" fill="#666666"/><circle cx="330.9" cy="362.2" r="3.8" fill="#666666"/><path d="M306 373.9 C306 369.6 308.8 367.7 312.6 367.7 C316.4 367.7 319.2 369.6 319.2 373.9 Z" fill="#666666"/><path d="M324.6 373.9 C324.6 369.6 327.4 367.7 331.2 367.7 C335 367.7 337.6 369.6 337.6 373.9 Z" fill="#666666"/><circle cx="321.7" cy="369.0" r="4.5" fill="#666666" stroke="#f9f9f9" stroke-width="1.6"/><path d="M312 383.2 C312 377.8 316.3 375.3 321.7 375.3 C327.1 375.3 331.4 377.8 331.4 383.2 Z" fill="#666666" stroke="#f9f9f9" stroke-width="1.4"/><g transform="translate(1073.3 369.7) rotate(-44)"><path d="M-11.6 0 L-7.6 -3 H6.3 V3 H-7.6 Z" fill="none" stroke="#555555" stroke-width="1.8" stroke-linejoin="round"/><rect x="6.6" y="-3.6" width="5" height="7.2" rx="1.8" fill="#555555"/><path d="M-7 0 H5.5" stroke="#555555" stroke-width="0.8" stroke-opacity="0.6"/></g><circle cx="313.1" cy="397.6" r="3.8" fill="#666666"/><circle cx="330.9" cy="397.6" r="3.8" fill="#666666"/><path d="M306 409.3 C306 405.0 308.8 403.1 312.6 403.1 C316.4 403.1 319.2 405.0 319.2 409.3 Z" fill="#666666"/><path d="M324.6 409.3 C324.6 405.0 327.4 403.1 331.2 403.1 C335 403.1 337.6 405.0 337.6 409.3 Z" fill="#666666"/><circle cx="321.7" cy="404.4" r="4.5" fill="#666666" stroke="#ffffff" stroke-width="1.6"/><path d="M312 418.6 C312 413.2 316.3 410.7 321.7 410.7 C327.1 410.7 331.4 413.2 331.4 418.6 Z" fill="#666666" stroke="#ffffff" stroke-width="1.4"/><g transform="translate(1073.3 405.1) rotate(-44)"><path d="M-11.6 0 L-7.6 -3 H6.3 V3 H-7.6 Z" fill="none" stroke="#555555" stroke-width="1.8" stroke-linejoin="round"/><rect x="6.6" y="-3.6" width="5" height="7.2" rx="1.8" fill="#555555"/><path d="M-7 0 H5.5" stroke="#555555" stroke-width="0.8" stroke-opacity="0.6"/></g><circle cx="313.1" cy="433.2" r="3.8" fill="#666666"/><circle cx="330.9" cy="433.2" r="3.8" fill="#666666"/><path d="M306 444.9 C306 440.6 308.8 438.7 312.6 438.7 C316.4 438.7 319.2 440.6 319.2 444.9 Z" fill="#666666"/><path d="M324.6 444.9 C324.6 440.6 327.4 438.7 331.2 438.7 C335 438.7 337.6 440.6 337.6 444.9 Z" fill="#666666"/><circle cx="321.7" cy="440.0" r="4.5" fill="#666666" stroke="#f9f9f9" stroke-width="1.6"/><path d="M312 454.2 C312 448.8 316.3 446.3 321.7 446.3 C327.1 446.3 331.4 448.8 331.4 454.2 Z" fill="#666666" stroke="#f9f9f9" stroke-width="1.4"/><g transform="translate(1073.3 440.7) rotate(-44)"><path d="M-11.6 0 L-7.6 -3 H6.3 V3 H-7.6 Z" fill="none" stroke="#555555" stroke-width="1.8" stroke-linejoin="round"/><rect x="6.6" y="-3.6" width="5" height="7.2" rx="1.8" fill="#555555"/><path d="M-7 0 H5.5" stroke="#555555" stroke-width="0.8" stroke-opacity="0.6"/></g><circle cx="313.1" cy="468.5" r="3.8" fill="#1f3f66"/><circle cx="330.9" cy="468.5" r="3.8" fill="#1f3f66"/><path d="M306 480.2 C306 475.9 308.8 474.0 312.6 474.0 C316.4 474.0 319.2 475.9 319.2 480.2 Z" fill="#1f3f66"/><path d="M324.6 480.2 C324.6 475.9 327.4 474.0 331.2 474.0 C335 474.0 337.6 475.9 337.6 480.2 Z" fill="#1f3f66"/><circle cx="321.7" cy="475.3" r="4.5" fill="#1f3f66" stroke="#46a7f6" stroke-width="1.6"/><path d="M312 489.5 C312 484.1 316.3 481.6 321.7 481.6 C327.1 481.6 331.4 484.1 331.4 489.5 Z" fill="#1f3f66" stroke="#46a7f6" stroke-width="1.4"/><g transform="translate(1073.3 476.0) rotate(-44)"><path d="M-11.6 0 L-7.6 -3 H6.3 V3 H-7.6 Z" fill="none" stroke="#1f3f66" stroke-width="1.8" stroke-linejoin="round"/><rect x="6.6" y="-3.6" width="5" height="7.2" rx="1.8" fill="#1f3f66"/><path d="M-7 0 H5.5" stroke="#1f3f66" stroke-width="0.8" stroke-opacity="0.6"/></g><circle cx="313.1" cy="504.0" r="3.8" fill="#666666"/><circle cx="330.9" cy="504.0" r="3.8" fill="#666666"/><path d="M306 515.7 C306 511.4 308.8 509.5 312.6 509.5 C316.4 509.5 319.2 511.4 319.2 515.7 Z" fill="#666666"/><path d="M324.6 515.7 C324.6 511.4 327.4 509.5 331.2 509.5 C335 509.5 337.6 511.4 337.6 515.7 Z" fill="#666666"/><circle cx="321.7" cy="510.8" r="4.5" fill="#666666" stroke="#f9f9f9" stroke-width="1.6"/><path d="M312 525.0 C312 519.6 316.3 517.1 321.7 517.1 C327.1 517.1 331.4 519.6 331.4 525.0 Z" fill="#666666" stroke="#f9f9f9" stroke-width="1.4"/><g transform="translate(1073.3 511.5) rotate(-44)"><path d="M-11.6 0 L-7.6 -3 H6.3 V3 H-7.6 Z" fill="none" stroke="#555555" stroke-width="1.8" stroke-linejoin="round"/><rect x="6.6" y="-3.6" width="5" height="7.2" rx="1.8" fill="#555555"/><path d="M-7 0 H5.5" stroke="#555555" stroke-width="0.8" stroke-opacity="0.6"/></g><circle cx="313.1" cy="539.6" r="3.8" fill="#666666"/><circle cx="330.9" cy="539.6" r="3.8" fill="#666666"/><path d="M306 551.3 C306 547.0 308.8 545.1 312.6 545.1 C316.4 545.1 319.2 547.0 319.2 551.3 Z" fill="#666666"/><path d="M324.6 551.3 C324.6 547.0 327.4 545.1 331.2 545.1 C335 545.1 337.6 547.0 337.6 551.3 Z" fill="#666666"/><circle cx="321.7" cy="546.4" r="4.5" fill="#666666" stroke="#ffffff" stroke-width="1.6"/><path d="M312 560.6 C312 555.2 316.3 552.7 321.7 552.7 C327.1 552.7 331.4 555.2 331.4 560.6 Z" fill="#666666" stroke="#ffffff" stroke-width="1.4"/><g transform="translate(1073.3 547.1) rotate(-44)"><path d="M-11.6 0 L-7.6 -3 H6.3 V3 H-7.6 Z" fill="none" stroke="#555555" stroke-width="1.8" stroke-linejoin="round"/><rect x="6.6" y="-3.6" width="5" height="7.2" rx="1.8" fill="#555555"/><path d="M-7 0 H5.5" stroke="#555555" stroke-width="0.8" stroke-opacity="0.6"/></g></svg>
<svg width="1094" height="829" style="left:0;top:0"><g fill="none" stroke="#e8558c" stroke-width="4.8" stroke-linecap="round" stroke-linejoin="round"><path d="M678.3 498 V580.5 M663.5 566.8 L678.3 581.2 L692.6 566.8"/></g><path d="M323.2 644.9 L327.6 649.2 L336.7 639.9" fill="none" stroke="#444" stroke-width="1.9" stroke-linecap="round" stroke-linejoin="round"/><path d="M606.8 645.1 L611.2 649.4 L620.3 640.1" fill="none" stroke="#444" stroke-width="1.9" stroke-linecap="round" stroke-linejoin="round"/><path d="M606.8 667.6 L611.2 671.9 L620.3 662.6" fill="none" stroke="#444" stroke-width="1.9" stroke-linecap="round" stroke-linejoin="round"/><path d="M606.8 691.0 L611.2 695.3 L620.3 686.0" fill="none" stroke="#444" stroke-width="1.9" stroke-linecap="round" stroke-linejoin="round"/><path d="M606.8 736.6 L611.2 740.9 L620.3 731.6" fill="none" stroke="#444" stroke-width="1.9" stroke-linecap="round" stroke-linejoin="round"/><path d="M606.8 759.9 L611.2 764.2 L620.3 754.9" fill="none" stroke="#444" stroke-width="1.9" stroke-linecap="round" stroke-linejoin="round"/><path d="M606.8 782.4 L611.2 786.7 L620.3 777.4" fill="none" stroke="#444" stroke-width="1.9" stroke-linecap="round" stroke-linejoin="round"/><path d="M608.2 804.3 L612.6 808.6 L621.7 799.3" fill="none" stroke="#444" stroke-width="1.9" stroke-linecap="round" stroke-linejoin="round"/></svg>
<div class="t" style="left:60.5px;top:62.6px;font-size:12.5px;font-weight:400;color:#e6e6ee;letter-spacing:0.215px;-webkit-text-stroke:0.1px #e6e6ee">Ylläpito (Mediamaestro2 Oy)</div>
<div class="t" style="left:60.5px;top:87.0px;font-size:15px;font-weight:700;color:#ffffff;letter-spacing:0.095px;">Yritysasetukset | Oikeudet</div>
<div class="t" style="left:565.1px;top:25.9px;font-size:16px;font-weight:700;color:#f2f2f2;letter-spacing:-0.117px;">merkuri</div>
<div class="t" style="left:40.6px;top:165.7px;font-size:16px;font-weight:400;color:#505050;letter-spacing:-0.250px;-webkit-text-stroke:0.1px #505050">MED MEDIAMAESTRO2 OY</div>
<div class="t" style="left:50.7px;top:230.9px;font-size:19px;font-weight:400;color:#2b2b40;letter-spacing:0.727px;-webkit-text-stroke:0.3px #2b2b40">Yritysasetukset</div>
<div class="t" style="left:15.4px;top:290.7px;font-size:16.5px;font-weight:700;color:#555555;letter-spacing:0.764px;">Yrityksen perustiedot</div>
<div class="t" style="left:72.4px;top:323.6px;font-size:15px;font-weight:400;color:#6e6e6e;letter-spacing:0.398px;-webkit-text-stroke:0.3px #6e6e6e">Hallitse yrityksen</div>
<div class="t" style="left:72.4px;top:344.2px;font-size:15px;font-weight:400;color:#6e6e6e;letter-spacing:0.627px;-webkit-text-stroke:0.3px #6e6e6e">perustietoja, pankkitilejä ja</div>
<div class="t" style="left:72.4px;top:364.1px;font-size:15px;font-weight:400;color:#6e6e6e;letter-spacing:0.583px;-webkit-text-stroke:0.3px #6e6e6e">logoja.</div>
<div class="t" style="left:15.4px;top:405.7px;font-size:16.5px;font-weight:700;color:#555555;letter-spacing:0.812px;">Käyttäjät ja roolit</div>
<div class="t" style="left:72.4px;top:438.6px;font-size:15px;font-weight:400;color:#6e6e6e;letter-spacing:0.633px;-webkit-text-stroke:0.3px #6e6e6e">Ylläpidä yrityksen käyttäjiä</div>
<div class="t" style="left:72.4px;top:458.8px;font-size:15px;font-weight:400;color:#6e6e6e;letter-spacing:0.761px;-webkit-text-stroke:0.3px #6e6e6e">ja määritä heille työnkuvan</div>
<div class="t" style="left:72.4px;top:479.1px;font-size:15px;font-weight:400;color:#6e6e6e;letter-spacing:0.721px;-webkit-text-stroke:0.3px #6e6e6e">mukaiset roolit</div>
<div class="t" style="left:15.4px;top:521.0px;font-size:16.5px;font-weight:700;color:#ffffff;letter-spacing:0.757px;">Yrityksen oikeudet</div>
<div class="t" style="left:72.4px;top:554.8px;font-size:15px;font-weight:400;color:#ffffff;letter-spacing:0.791px;-webkit-text-stroke:0.3px #ffffff">Määritä yrityksen käyttäjä-</div>
<div class="t" style="left:72.4px;top:574.5px;font-size:15px;font-weight:400;color:#ffffff;letter-spacing:0.810px;-webkit-text-stroke:0.3px #ffffff">ja ryhmäkohtaiset oikeudet</div>
<div class="t" style="left:15.4px;top:620.7px;font-size:16.5px;font-weight:700;color:#555555;letter-spacing:0.765px;">Sovellukset ja ominaisuudet</div>
<div class="t" style="left:72.4px;top:653.0px;font-size:15px;font-weight:400;color:#6e6e6e;letter-spacing:0.632px;-webkit-text-stroke:0.3px #6e6e6e">Tarkastele käytössä olevia</div>
<div class="t" style="left:72.4px;top:674.2px;font-size:15px;font-weight:400;color:#6e6e6e;letter-spacing:0.757px;-webkit-text-stroke:0.3px #6e6e6e">ominaisuuksia ja ota</div>
<div class="t" style="left:72.4px;top:694.1px;font-size:15px;font-weight:400;color:#6e6e6e;letter-spacing:0.692px;-webkit-text-stroke:0.3px #6e6e6e">käyttöön uusia.</div>
<div class="t" style="left:15.4px;top:735.8px;font-size:16.5px;font-weight:700;color:#555555;letter-spacing:1.392px;">Verokannat</div>
<div class="t" style="left:72.2px;top:768.8px;font-size:15px;font-weight:400;color:#6e6e6e;letter-spacing:0.752px;-webkit-text-stroke:0.3px #6e6e6e">Luo maakohtaiset</div>
<div class="t" style="left:72.2px;top:789.2px;font-size:15px;font-weight:400;color:#6e6e6e;letter-spacing:0.936px;-webkit-text-stroke:0.3px #6e6e6e">verokantataulut ja määritä</div>
<div class="t" style="left:77.6px;top:808.5px;font-size:15px;font-weight:400;color:#6e6e6e;letter-spacing:0.467px;-webkit-text-stroke:0.3px #6e6e6e">niille veroprosentit,</div>
<div class="t" style="left:301.6px;top:168.5px;font-size:19px;font-weight:400;color:#2b2b40;letter-spacing:0.849px;-webkit-text-stroke:0.3px #2b2b40">Hallitse käyttöoikeuksia</div>
<div class="t" style="left:305.9px;top:220.9px;font-size:15px;font-weight:400;color:#333340;letter-spacing:0.724px;-webkit-text-stroke:0.3px #333340">Näytä käyttöoikeudet valitsemalla rivi käyttöoikeustaulukosta</div>
<div class="t" style="left:309.4px;top:261.3px;font-size:12px;font-weight:400;color:#4eabf4;letter-spacing:0.252px;-webkit-text-stroke:0.3px #4eabf4">LISÄÄ UUSI</div>
<div class="t" style="left:307.6px;top:290.1px;font-size:13px;font-weight:700;color:#151515;letter-spacing:0.717px;">Käyttäjä</div>
<div class="t" style="left:377.7px;top:336.4px;font-size:13px;font-weight:700;color:#333333;letter-spacing:0.543px;">Nimi</div>
<div class="t" style="left:761.2px;top:336.4px;font-size:13px;font-weight:700;color:#333333;letter-spacing:0.645px;">Tehtävänimike</div>
<div class="t" style="left:889.2px;top:336.4px;font-size:13px;font-weight:700;color:#333333;letter-spacing:0.457px;">Organisaatio</div>
<div class="t" style="left:377.7px;top:371.1px;font-size:13.5px;font-weight:400;color:#444444;letter-spacing:0.409px;-webkit-text-stroke:0.4px #444444">Administrators</div>
<div class="t" style="left:761.0px;top:371.3px;font-size:13.5px;font-weight:400;color:#444444;letter-spacing:0.338px;-webkit-text-stroke:0.4px #444444">Internal group</div>
<div class="t" style="left:377.7px;top:406.7px;font-size:13.5px;font-weight:400;color:#444444;letter-spacing:0.048px;-webkit-text-stroke:0.4px #444444">MED - Käyttäjä</div>
<div class="t" style="left:377.7px;top:441.8px;font-size:13.5px;font-weight:400;color:#444444;letter-spacing:0.044px;-webkit-text-stroke:0.4px #444444">MED - Raportointi</div>
<div class="t" style="left:378.1px;top:477.8px;font-size:13px;font-weight:700;color:#15152a;letter-spacing:0.311px;">MED - Taloushallinnon käyttäjä</div>
<div class="t" style="left:377.7px;top:513.3px;font-size:13.5px;font-weight:400;color:#444444;letter-spacing:-0.040px;-webkit-text-stroke:0.4px #444444">MED - Yrityksen johto</div>
<div class="t" style="left:377.7px;top:548.5px;font-size:13.5px;font-weight:400;color:#444444;letter-spacing:0.178px;-webkit-text-stroke:0.4px #444444">MED - Yrityksen pääkäyttäjä</div>
<div class="t" style="left:308.2px;top:586.2px;font-size:13px;font-weight:700;color:#151515;letter-spacing:0.302px;">Oikeudet MED - Taloushallinnon käyttäjä</div>
<div class="t" style="left:307.1px;top:622.5px;font-size:13px;font-weight:400;color:#222222;letter-spacing:0.265px;-webkit-text-stroke:0.3px #222">Pääsy</div>
<div class="t" style="left:342.5px;top:646.2px;font-size:13px;font-weight:400;color:#555555;letter-spacing:0.542px;-webkit-text-stroke:0.25px #555">Oikeus päästä yritykseen</div>
<div class="t" style="left:589.9px;top:622.4px;font-size:13px;font-weight:400;color:#222222;letter-spacing:0.621px;-webkit-text-stroke:0.3px #222">Muokkaus</div>
<div class="t" style="left:625.5px;top:646.5px;font-size:13px;font-weight:400;color:#555555;letter-spacing:0.599px;-webkit-text-stroke:0.25px #555">Oikeus muokata yrityksen tietoja</div>
<div class="t" style="left:625.5px;top:669.0px;font-size:13px;font-weight:400;color:#555555;letter-spacing:0.580px;-webkit-text-stroke:0.25px #555">Oikeus muokata oikeuksia</div>
<div class="t" style="left:625.5px;top:692.4px;font-size:13px;font-weight:400;color:#555555;letter-spacing:0.672px;-webkit-text-stroke:0.25px #555">Oikeus asettaa moduuleja käyttöön tai</div>
<div class="t" style="left:605.5px;top:714.7px;font-size:13px;font-weight:400;color:#555555;letter-spacing:0.760px;-webkit-text-stroke:0.25px #555">pois käytöstä</div>
<div class="t" style="left:625.5px;top:738.0px;font-size:13px;font-weight:400;color:#555555;letter-spacing:0.659px;-webkit-text-stroke:0.25px #555">Oikeus muokata yrityksen ryhmittelyjä</div>
<div class="t" style="left:625.5px;top:761.2px;font-size:13px;font-weight:400;color:#555555;letter-spacing:0.583px;-webkit-text-stroke:0.25px #555">Oikeus hallita yrityksen käyttäjiä</div>
<div class="t" style="left:625.5px;top:783.8px;font-size:13px;font-weight:400;color:#555555;letter-spacing:0.683px;-webkit-text-stroke:0.25px #555">Oikeus työpöydän talousraportointiin</div>
<div class="t" style="left:627.5px;top:805.7px;font-size:13px;font-weight:400;color:#555555;letter-spacing:0.591px;-webkit-text-stroke:0.25px #555">Oikeus muokata kirjanpidon tilejä</div>
</div></div>
<!-- frame -->
<div class="b" style="left:0;top:0;width:883px;height:3px;background:linear-gradient(#353535,#555 70%,#4a4a4a)"></div>
<div class="b" style="left:0;top:3px;width:883px;height:1.5px;background:#151515"></div>
<div class="b" style="left:883px;top:0;width:211px;height:1.5px;background:#454545"></div>
<div class="b" style="left:883px;top:1.5px;width:211px;height:1.5px;background:#151515"></div>
<div class="b" style="left:0;top:0;width:3px;height:801px;background:linear-gradient(90deg,#353535,#555 70%,#444)"></div>
<div class="b" style="left:3px;top:4px;width:1.5px;height:48px;background:#151515"></div>
<div class="b" style="left:0;top:801px;width:3px;height:28px;background:#8a8a8a"></div>
<div class="b" style="left:3px;top:103px;width:5px;height:33px;background:linear-gradient(90deg,rgba(0,0,0,0.12),rgba(0,0,0,0))"></div>
<div class="b" style="left:3px;top:136px;width:8px;height:70px;background:linear-gradient(90deg,rgba(0,0,0,0.16),rgba(0,0,0,0))"></div>
<div class="b" style="left:3px;top:206px;width:12px;height:623px;background:linear-gradient(90deg,rgba(0,0,0,0.18),rgba(0,0,0,0.06) 40%,rgba(0,0,0,0))"></div>
<div class="b" style="left:1077px;top:0;width:17px;height:829px;background:linear-gradient(90deg,rgba(0,0,0,0),rgba(0,0,0,0.02) 35%,rgba(0,0,0,0.12) 60%,rgba(0,0,0,0.35) 85%,rgba(0,0,0,0.6))"></div>
<div class="b" style="left:0;top:811px;width:1094px;height:18px;background:linear-gradient(rgba(0,0,0,0),rgba(0,0,0,0.04) 30%,rgba(0,0,0,0.25) 70%,rgba(0,0,0,0.68))"></div>
</body></html>
